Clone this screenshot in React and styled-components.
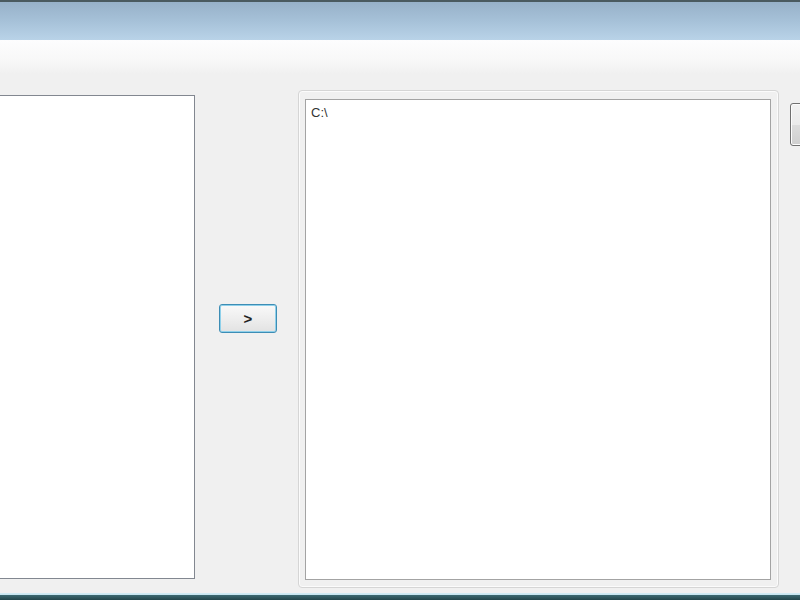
import React from "react";
import styled, { createGlobalStyle } from "styled-components";

const GlobalStyle = createGlobalStyle`
  html, body {
    margin: 0;
    padding: 0;
    overflow: hidden;
  }
  body {
    font-family: "Liberation Sans", Arial, sans-serif;
  }
`;

const Window = styled.div`
  width: 800px;
  height: 600px;
  display: flex;
  flex-direction: column;
  overflow: hidden;
  background: #f0f0f0;
`;

const TitleBar = styled.div`
  height: 40px;
  flex-shrink: 0;
  border-top: 2px solid #4a5a60;
  box-sizing: border-box;
  background: linear-gradient(#97b1c9 0%, #a6c1d8 50%, #b9d3e8 100%);
`;

const Client = styled.div`
  flex: 1;
  display: flex;
  align-items: flex-start;
  padding-top: 50px;
  background: linear-gradient(#fdfdfe 0px, #f8f8f8 20px, #f0f0f0 34px);
  overflow: hidden;
`;

const ListBox = styled.div`
  box-sizing: border-box;
  flex-shrink: 0;
  background: #fff;
  border: 1px solid ${(p) => p.$border || "#828790"};
  width: ${(p) => p.$w}px;
  height: ${(p) => p.$h}px;
  padding: 5px 5px;
  font-size: 13px;
  line-height: 16px;
  color: #333;
`;

const LeftList = styled(ListBox)`
  margin-left: -10px;
  margin-top: 5px;
`;

const MoveButton = styled.button`
  box-sizing: border-box;
  flex-shrink: 0;
  width: 58px;
  height: 29px;
  margin: 214px 21px 0 24px;
  border: 1px solid #3d8db5;
  border-radius: 3px;
  box-shadow: inset 0 0 0 1px #8fd0ea;
  background: linear-gradient(#f9f9f9 0%, #eeeeee 50%, #e2e2e2 100%);
  font-family: "Liberation Sans", Arial, sans-serif;
  font-size: 15px;
  font-weight: bold;
  color: #222;
  padding: 0;
`;

const Group = styled.div`
  box-sizing: border-box;
  flex-shrink: 0;
  width: 481px;
  height: 498px;
  border: 1px solid #d5d5d5;
  border-radius: 4px;
  box-shadow: inset 0 0 0 1px #fbfbfb;
  padding: 8px 7px 7px 6px;
`;

const SideButton = styled.button`
  box-sizing: border-box;
  flex-shrink: 0;
  width: 80px;
  height: 43px;
  margin: 13px 0 0 11px;
  border: 1px solid #707070;
  border-radius: 3px;
  box-shadow: inset 0 0 0 1px #fcfcfc;
  background: linear-gradient(#f2f2f2 0%, #ebebeb 50%, #dddddd 51%, #cfcfcf 100%);
`;

const BottomFrame = styled.div`
  height: 8px;
  flex-shrink: 0;
  background: linear-gradient(#f0f0f0 0px, #f0f0f0 1px, #d4eef6 1px, #c4e3ee 3px, #3d6a72 3px, #23454b 8px);
`;

export default function App() {
  return (
    <>
      <GlobalStyle />
      <Window>
        <TitleBar />
        <Client>
          <LeftList $w={205} $h={484} />
          <MoveButton>&gt;</MoveButton>
          <Group>
            <ListBox $w={466} $h={481} $border="#a3a3a3">
              C:\
            </ListBox>
          </Group>
          <SideButton />
        </Client>
        <BottomFrame />
      </Window>
    </>
  );
}
